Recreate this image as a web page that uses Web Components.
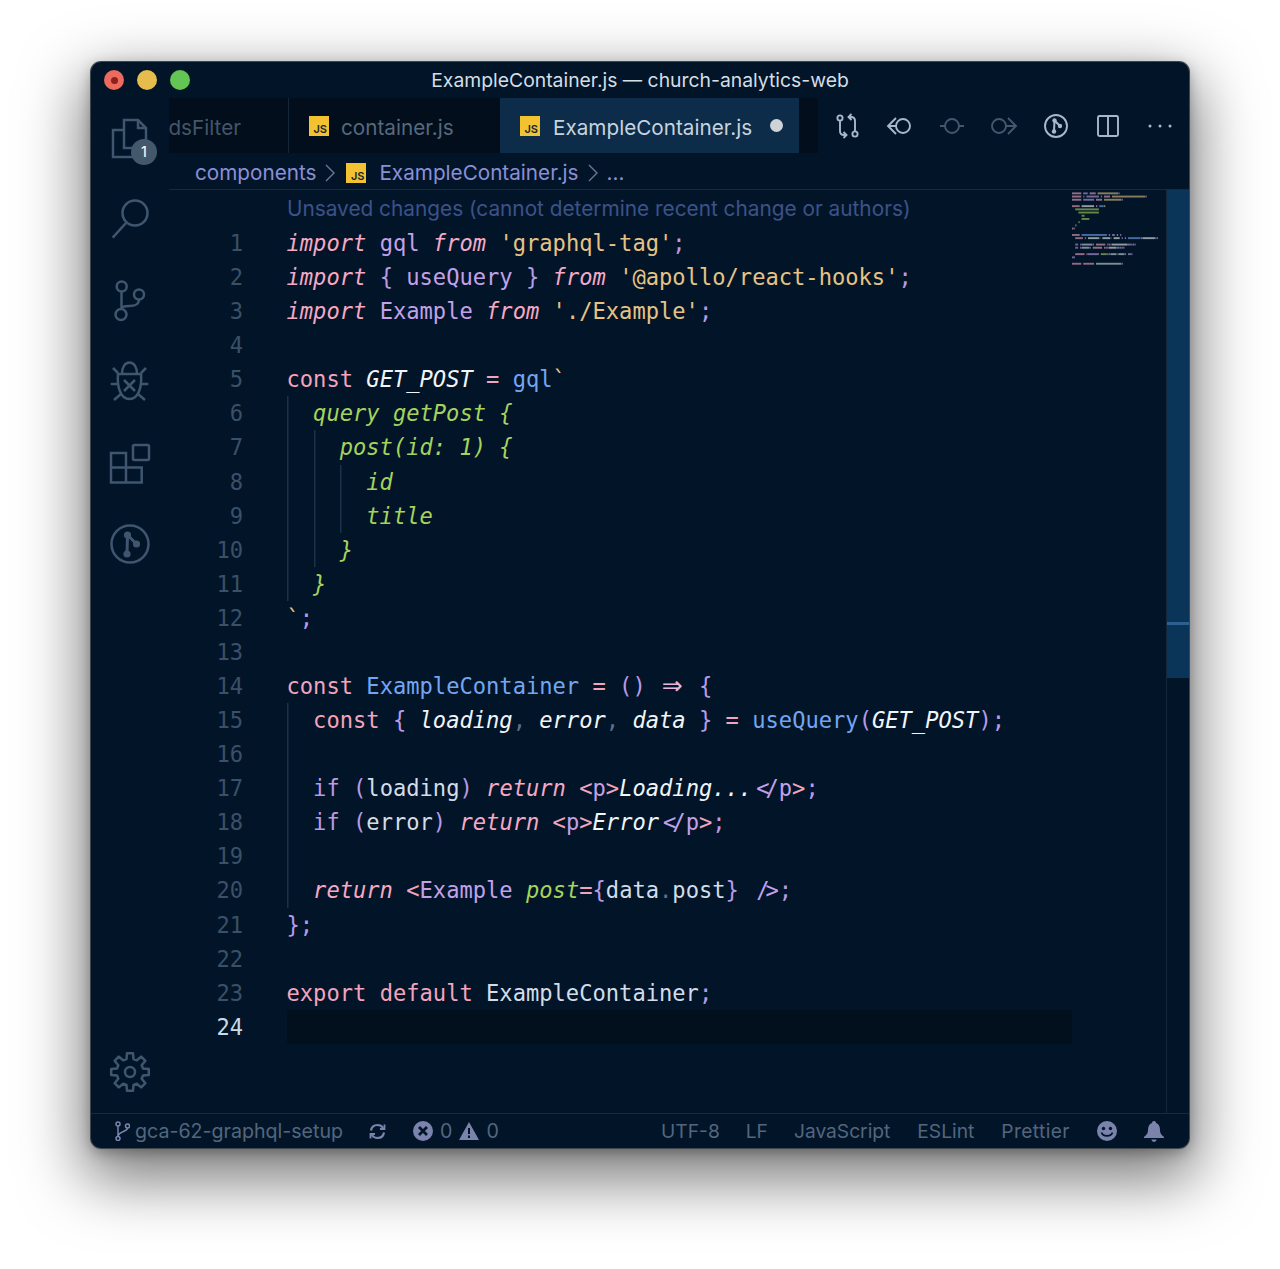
<!DOCTYPE html>
<html>
<head>
<meta charset="utf-8">
<title>ExampleContainer.js</title>
<style>
  html, body { margin: 0; background: #fff; }
  body { height: 1269px; overflow: hidden; padding: 62px 91px 0; box-sizing: border-box; }
</style>
</head>
<body>
<vs-window>
  <vs-titlebar slot="title">ExampleContainer.js — church-analytics-web</vs-titlebar>
  <vs-activity slot="activity"></vs-activity>
  <vs-tabs slot="tabs"></vs-tabs>
  <vs-breadcrumb slot="crumbs"></vs-breadcrumb>
  <vs-editor slot="editor"></vs-editor>
  <vs-status slot="status"></vs-status>
</vs-window>

<script>
const UI_FONT = `Inter, "Noto Sans", sans-serif`;
const CODE_FONT = `"DejaVu Sans Mono", "Liberation Mono", monospace`;

const jsIcon = `<span class="js">JS</span>`;
const jsIconCss = `
  .js {
    display: inline-flex; align-items: flex-end; justify-content: flex-end;
    width: 20px; height: 20px; flex: none; box-sizing: border-box; padding: 0 2px 0 0;
    background: #f2c230; color: #1a2430; font: 600 11px/14px ${UI_FONT};
  }`;

class VsWindow extends HTMLElement {
  connectedCallback() {
    this.attachShadow({ mode: 'open' }).innerHTML = `
      <style>
        :host {
          display: block; width: 1098px; height: 1086px; box-sizing: border-box;
          border-radius: 10px; overflow: visible;
          background: #021528;
          box-shadow: 0 0 0 1px #3f464c, 0 24px 62px 8px rgba(0,0,0,.52), 0 4px 14px rgba(0,0,0,.3);
        }
        .frame { display: flex; flex-direction: column; height: 100%; border-radius: 10px; overflow: hidden; }
        .body { flex: 1; display: flex; min-height: 0; }
        .main { flex: 1; display: flex; flex-direction: column; min-width: 0; }
      </style>
      <div class="frame">
        <slot name="title"></slot>
        <div class="body">
          <slot name="activity"></slot>
          <div class="main">
            <slot name="tabs"></slot>
            <slot name="crumbs"></slot>
            <slot name="editor"></slot>
          </div>
        </div>
        <slot name="status"></slot>
      </div>`;
  }
}

class VsTitlebar extends HTMLElement {
  connectedCallback() {
    this.attachShadow({ mode: 'open' }).innerHTML = `
      <style>
        :host {
          display: flex; align-items: center; justify-content: center; flex: none;
          height: 36px; position: relative;
          color: #d5dde5; font: 400 19.35px/35px ${UI_FONT};
        }
        .lights { position: absolute; left: 13px; top: 8px; display: flex; gap: 13px; }
        .lights i { width: 20px; height: 20px; border-radius: 50%; display: block; }
        .r { background: #ec6a5e; position: relative; }
        .r::after { content: ''; position: absolute; left: 6.5px; top: 6.5px; width: 7px; height: 7px; border-radius: 50%; background: #8f1f1a; }
        .y { background: #e6bd4d; }
        .g { background: #62c554; }
      </style>
      <div class="lights"><i class="r"></i><i class="y"></i><i class="g"></i></div>
      <slot></slot>`;
  }
}

function gearPath(cx, cy, outer, inner, teeth) {
  const pts = [];
  const step = Math.PI * 2 / teeth;
  for (let i = 0; i < teeth; i++) {
    const a = i * step - Math.PI / 2;
    const at = (r, d) => `${(cx + r * Math.cos(a + d)).toFixed(1)} ${(cy + r * Math.sin(a + d)).toFixed(1)}`;
    pts.push(at(outer, -step * 0.2), at(outer, step * 0.2), at(inner, step * 0.33), at(inner, step * 0.67));
  }
  return 'M' + pts.join('L') + 'Z';
}

class VsActivity extends HTMLElement {
  connectedCallback() {
    const svg = (inner) => `<svg width="44" height="44" viewBox="0 0 44 44" fill="none" stroke="currentColor" stroke-width="2.5">${inner}</svg>`;
    this.attachShadow({ mode: 'open' }).innerHTML = `
      <style>
        :host {
          display: flex; flex-direction: column; flex: none; width: 78px;
          color: #3f566e; position: relative;
        }
        .slot { height: 81.5px; display: flex; align-items: center; justify-content: center; flex: none; position: relative; box-sizing: border-box; }
        .first { height: 79.5px; padding-top: 2px; }
        .gear { margin-top: auto; margin-bottom: 19px; height: 44px; }
        .badge {
          position: absolute; left: 40px; top: 41px; width: 26px; height: 26px; border-radius: 50%;
          background: #44586c; color: #f1f4f7; font: 500 14px/26px ${UI_FONT}; text-align: center;
        }
      </style>
      <div class="slot first">
        ${svg(`<path d="M16 13V3H30L38 11V31H16V13H5V40H27V31"/><path d="M30 3V11H38"/>`)}
        <span class="badge">1</span>
      </div>
      <div class="slot">${svg(`<circle cx="27" cy="17" r="12.5"/><path d="M18 27 4.7 41.7"/>`)}</div>
      <div class="slot">${svg(`<circle cx="13.7" cy="8.5" r="5"/><circle cx="31" cy="16.5" r="5"/><circle cx="13" cy="36.5" r="5.5"/><path d="M13.5 13.5V31M31 21.5C31 27 27 28 21 28 17 28 13.5 29 13.5 31"/>`)}</div>
      <div class="slot">${svg(`<path d="M10 15H33C34 27 31 40 21.5 40 12 40 9 27 10 15Z"/><path d="M14 15C14 8 17 3.5 21.5 3.5 26 3.5 29 8 29 15"/><path d="M16 21 27 32M27 21 16 32M5 9 10 14M38 9 33 14M2.7 25H10M40.3 25H33M6 41 13 35M37 41 30 35"/>`)}</div>
      <div class="slot">${svg(`<rect x="25" y="4" width="16" height="15" rx="1.5"/><path d="M3 12H18V26.5H33.7V41.5H3ZM3 26.5H18V41.5"/>`)}</div>
      <div class="slot">${svg(`<circle cx="22" cy="22" r="18.5"/><path d="M19.5 13 19 32M19.5 13 28.5 22" stroke-width="3"/><circle cx="19.5" cy="13" r="3.6" fill="currentColor" stroke="none"/><circle cx="28.5" cy="22" r="3.6" fill="currentColor" stroke="none"/><circle cx="19" cy="32" r="3.6" fill="currentColor" stroke="none"/>`)}</div>
      <div class="slot gear">${svg(`<path stroke-linejoin="round" d="${gearPath(22, 22, 19, 13.5, 8)}"/><circle cx="22" cy="22" r="5"/>`)}</div>`;
  }
}

class VsTabs extends HTMLElement {
  connectedCallback() {
    const ico = (inner, cls = '') => `<span class="act ${cls}"><svg width="28" height="28" viewBox="0 0 28 28" fill="none" stroke="currentColor" stroke-width="1.9">${inner}</svg></span>`;
    this.attachShadow({ mode: 'open' }).innerHTML = `
      <style>
        :host { display: flex; flex: none; height: 55px; font: 400 20.7px/55px ${UI_FONT}; }
        .strip { display: flex; width: 649px; flex: none; background: #020e1b; }
        .tab { display: flex; align-items: center; height: 55px; box-sizing: border-box; flex: none; overflow: hidden; white-space: nowrap; }
        .tab > span:not(.js):not(.dot) { padding-top: 3px; }
        .cut { width: 120px; justify-content: flex-end; padding-right: 47px; color: #43566a; border-right: 1px solid #152638; }
        .cont { width: 211px; padding-left: 20px; gap: 12px; color: #56697e; }
        .on { width: 299px; padding-left: 20px; gap: 13px; color: #c7d3df; background: #0c2c49; }
        .on .dot { width: 13px; height: 13px; border-radius: 50%; background: #ced3d8; margin-left: 5px; }
        ${jsIconCss}
        .tools { display: flex; padding-left: 4px; }
        .act { width: 52px; display: flex; align-items: center; justify-content: center; color: #a6b8c9; height: 55px; }
        .dim { color: #43586c; }
      </style>
      <div class="strip">
        <div class="tab cut"><span>ndsFilter</span></div>
        <div class="tab cont">${jsIcon}<span>container.js</span></div>
        <div class="tab on">${jsIcon}<span>ExampleContainer.js</span><span class="dot"></span></div>
      </div>
      <div class="tools">
        ${ico(`<circle cx="6" cy="6" r="2.6"/><circle cx="21" cy="22" r="2.6"/><path d="M6 8.6V19Q6 23 10 23H12.5M9.5 20 12.5 23 9.5 26M21 19.4V9Q21 5 17 5H14.5M17.5 2 14.5 5 17.5 8"/>`)}
        ${ico(`<circle cx="17" cy="14" r="7"/><path d="M10 6 2 14 10 22M2 14H10"/>`)}
        ${ico(`<circle cx="14" cy="14" r="7"/><path d="M2 14H7M21 14H26"/>`, 'dim')}
        ${ico(`<circle cx="9" cy="14" r="7"/><path d="M18 6 26 14 18 22M16 14H26"/>`, 'dim')}
        ${ico(`<circle cx="14" cy="14" r="11"/><path d="M12.5 8.5 12 19.5M12.5 8.5 18 14" stroke-width="2"/><circle cx="12.5" cy="8.5" r="2.2" fill="currentColor" stroke="none"/><circle cx="18" cy="14" r="2.2" fill="currentColor" stroke="none"/><circle cx="12" cy="19.5" r="2.2" fill="currentColor" stroke="none"/>`)}
        ${ico(`<rect x="4" y="4" width="20" height="20" rx="1.5"/><path d="M14 4V24"/>`)}
        ${ico(`<circle cx="4" cy="14" r="1.5" fill="currentColor" stroke="none"/><circle cx="14" cy="14" r="1.5" fill="currentColor" stroke="none"/><circle cx="24" cy="14" r="1.5" fill="currentColor" stroke="none"/>`)}
      </div>`;
  }
}

class VsBreadcrumb extends HTMLElement {
  connectedCallback() {
    const chev = `<svg width="10" height="18" viewBox="0 0 10 18" fill="none" stroke="#6d7695" stroke-width="1.4"><path d="M1 1 9 9 1 17"/></svg>`;
    this.attachShadow({ mode: 'open' }).innerHTML = `
      <style>
        :host {
          display: flex; align-items: center; flex: none; height: 37px; box-sizing: border-box;
          padding: 3px 0 0 26px; border-bottom: 1px solid #1c2a38;
          color: #8b8fd6; font: 400 20.7px/33px ${UI_FONT}; white-space: nowrap;
        }
        ${jsIconCss}
        svg { margin: 0 9px; flex: none; }
        .js { margin: 0 13px 0 2px; }
      </style>
      <span>components</span>${chev}${jsIcon}<span>ExampleContainer.js</span>${chev}<span>...</span>`;
  }
}

// one file's worth of tokens: [class, text], plain strings are whitespace
const CODE = [
  [['k','import'],' ',['v','gql'],' ',['k','from'],' ',['s',"'graphql-tag'"],['p',';']],
  [['k','import'],' ',['p','{'],' ',['v','useQuery'],' ',['p','}'],' ',['k','from'],' ',['s',"'@apollo/react-hooks'"],['p',';']],
  [['k','import'],' ',['v','Example'],' ',['k','from'],' ',['s',"'./Example'"],['p',';']],
  [],
  [['c','const'],' ',['w','GET_POST'],' ',['c','='],' ',['b','gql'],['s','`']],
  ['  ',['g','query getPost {']],
  ['    ',['g','post(id: 1) {']],
  ['      ',['g','id']],
  ['      ',['g','title']],
  ['    ',['g','}']],
  ['  ',['g','}']],
  [['s','`'],['p',';']],
  [],
  [['c','const'],' ',['b','ExampleContainer'],' ',['c','='],' ',['p','()'],' ',['arrow','⇒'],' ',['p','{']],
  ['  ',['c','const'],' ',['p','{'],' ',['w','loading'],['d',','],' ',['w','error'],['d',','],' ',['w','data'],' ',['p','}'],' ',['c','='],' ',['b','useQuery'],['p','('],['w','GET_POST'],['p',')'],['p',';']],
  [],
  ['  ',['i','if'],' ',['p','('],['n','loading'],['p',')'],' ',['k','return'],' ',['c','<'],['v','p'],['c','>'],['w','Loading...'],['lt','</'],['v','p'],['c','>'],['p',';']],
  ['  ',['i','if'],' ',['p','('],['n','error'],['p',')'],' ',['k','return'],' ',['c','<'],['v','p'],['c','>'],['w','Error'],['lt','</'],['v','p'],['c','>'],['p',';']],
  [],
  ['  ',['k','return'],' ',['c','<'],['v','Example'],' ',['g','post'],['c','='],['p','{'],['n','data'],['d','.'],['n','post'],['p','}'],' ',['lt','/>'],['p',';']],
  [['p','};']],
  [],
  [['c','export'],' ',['c','default'],' ',['n','ExampleContainer'],['p',';']],
  [],
];

const TOKEN_COLORS = {
  k: '#f7a8c4', c: '#f3a4bd', v: '#c3a1e8', s: '#e6c384', p: '#b99ae6', w: '#f2f5f8', n: '#d3dde8',
  b: '#74a5f2', g: '#a5d35c', i: '#b99ae6', d: '#5d7189', arrow: '#e8b6d8', lt: '#c3a1e8',
};

// how many indent guides each line shows (0-based line index)
const GUIDES = { 5: 1, 6: 2, 7: 3, 8: 3, 9: 2, 10: 1, 14: 1, 15: 1, 16: 1, 17: 1, 18: 1, 19: 1 };

class VsEditor extends HTMLElement {
  connectedCallback() {
    const lines = CODE.map((toks, i) => {
      const guides = GUIDES[i] || 0;
      const bg = [];
      for (let g = 0; g < guides; g++) {
        bg.push(`linear-gradient(#1a3148,#1a3148) ${Math.round(g * 26.5)}px 0/1.5px 100% no-repeat`);
      }
      const html = toks.map(t => typeof t === 'string' ? t
        : `<span class="${t[0]}">${t[1].replace(/</g, '&lt;')}</span>`).join('');
      const cur = i === CODE.length - 1;
      return `<div class="row${cur ? ' cur' : ''}"><span class="num">${i + 1}</span><span class="code" style="${bg.length ? 'background:' + bg.join(',') : ''}">${html}</span></div>`;
    }).join('');

    this.attachShadow({ mode: 'open' }).innerHTML = `
      <style>
        :host { display: flex; flex: 1; min-height: 0; }
        .pane { flex: none; width: 903px; }
        .lens {
          height: 36px; padding-left: 118px; color: #3c5288;
          font: 400 20.8px/38px ${UI_FONT}; white-space: nowrap;
        }
        .row { display: flex; height: 34.08px; font: 400 22.1px/34.08px ${CODE_FONT}; white-space: pre; }
        .num { width: 74px; margin-right: 43.5px; flex: none; text-align: right; color: #3a5066; }
        .cur .num { color: #cbd9e6; }
        .code { flex: 1; }
        .cur .code { background: #020f1c; }
        .k, .w, .g { font-style: italic; }
        ${Object.entries(TOKEN_COLORS).map(([k, v]) => `.${k}{color:${v}}`).join('')}
        .arrow { display: inline-block; width: 26.6px; text-align: center; font: 400 25px/20px "DejaVu Sans", sans-serif; }
        .lt { display: inline-block; width: 2ch; text-align: center; letter-spacing: -4px; }
        .map { width: 94px; flex: none; border-right: 1px solid #14283c; }
        .map svg { display: block; filter: blur(.45px); }
        .track { flex: 1; display: flex; flex-direction: column; }
        .thumb { height: 488px; background: #0b3558; position: relative; flex: none; }
        .thumb::after { content: ''; position: absolute; left: 0; right: 0; top: 432px; height: 3px; background: #2c618f; }
      </style>
      <div class="pane">
        <div class="lens">Unsaved changes (cannot determine recent change or authors)</div>
        ${lines}
      </div>
      <div class="map">${this.#minimap()}</div>
      <div class="track"><div class="thumb"></div></div>`;
  }

  // the minimap is only colour blocks, one per token
  #minimap() {
    const rects = [];
    CODE.forEach((toks, i) => {
      let col = 0;
      toks.forEach(t => {
        const text = typeof t === 'string' ? t : t[1];
        if (typeof t !== 'string') {
          rects.push(`<rect x="${(col * 1.6).toFixed(1)}" y="${(i * 3.2 + 2.4).toFixed(1)}" width="${(text.length * 1.6 - .3).toFixed(1)}" height="1.9" fill="${TOKEN_COLORS[t[0]]}" opacity=".6"/>`);
        }
        col += text.length;
      });
    });
    return `<svg width="94" height="90" viewBox="0 0 94 90">${rects.join('')}</svg>`;
  }
}

class VsStatus extends HTMLElement {
  connectedCallback() {
    this.attachShadow({ mode: 'open' }).innerHTML = `
      <style>
        :host {
          display: flex; align-items: center; flex: none; height: 35px; box-sizing: border-box;
          border-top: 1px solid #1a2a3a; padding: 0 25px 0 24px;
          color: #53667f; font: 400 19.6px/34px ${UI_FONT}; white-space: nowrap;
        }
        svg { display: block; flex: none; }
        .branch { margin-right: 5px; }
        .sync { margin: 0 27px 0 26px; }
        .n { margin: 0 7px; }
        .right { margin-left: auto; display: flex; align-items: center; gap: 27px; font-size: 19.2px; }
        .tight { margin-left: -1px; }
        .wide { letter-spacing: .4px; }
      </style>
      <svg class="branch" width="15" height="20" viewBox="0 0 15 20" fill="none" stroke="#7b83ad" stroke-width="1.5"><circle cx="3" cy="3" r="2"/><circle cx="3" cy="17.5" r="2"/><circle cx="12.5" cy="5" r="2"/><path d="M3 5V15.5M12.5 7C12.5 11 3.5 10 3 15.5"/></svg>
      <span>gca-62-graphql-setup</span>
      <svg class="sync" width="17" height="17" viewBox="0 0 17 17" fill="none" stroke="#7b83ad" stroke-width="2.2"><path d="M2 7.5C2.6 4.2 5.2 2 8.5 2 11 2 13 3.2 14.2 5M15 9.5C14.4 12.8 11.8 15 8.5 15 6 15 4 13.8 2.8 12"/><path d="M15.5 1.5V6H11M1.5 15.5V11H6" stroke-width="1.8"/></svg>
      <svg width="20" height="20" viewBox="0 0 20 20"><circle cx="10" cy="10" r="10" fill="#7b83ad"/><path d="M6 6 14 14M14 6 6 14" stroke="#021528" stroke-width="2.8"/></svg>
      <span class="n">0</span>
      <svg width="20" height="18" viewBox="0 0 20 18"><path d="M10 0 20 18H0Z" fill="#7b83ad"/><path d="M10 6V12M10 13.5V16" stroke="#021528" stroke-width="2"/></svg>
      <span class="n">0</span>
      <div class="right">
        <span>UTF-8</span><span class="tight">LF</span><span class="tight">JavaScript</span><span>ESLint</span><span class="wide">Prettier</span>
        <svg width="20" height="20" viewBox="0 0 20 20"><circle cx="10" cy="10" r="10" fill="#7b83ad"/><circle cx="6.5" cy="7.5" r="1.7" fill="#021528"/><circle cx="13.5" cy="7.5" r="1.7" fill="#021528"/><path d="M4.5 11.5C6 16 14 16 15.5 11.5" fill="none" stroke="#021528" stroke-width="1.8"/></svg>
        <svg width="20" height="21" viewBox="0 0 20 21"><path d="M10 0C12 0 12 2 12 2 15 3 16 6 16 9 16 13 18 14 20 16V17H0V16C2 14 4 13 4 9 4 6 5 3 8 2 8 2 8 0 10 0Z" fill="#7b83ad"/><path d="M7.5 18.5H12.5C12.5 20 11 21 10 21 9 21 7.5 20 7.5 18.5Z" fill="#7b83ad"/></svg>
      </div>`;
  }
}

customElements.define('vs-window', VsWindow);
customElements.define('vs-titlebar', VsTitlebar);
customElements.define('vs-activity', VsActivity);
customElements.define('vs-tabs', VsTabs);
customElements.define('vs-breadcrumb', VsBreadcrumb);
customElements.define('vs-editor', VsEditor);
customElements.define('vs-status', VsStatus);
</script>
</body>
</html>
